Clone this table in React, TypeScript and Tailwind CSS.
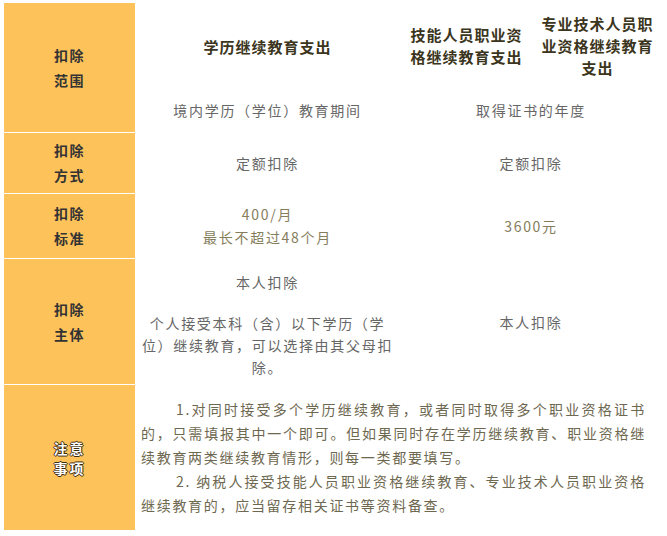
export default function App() {
  const font = { fontFamily: '"Noto Sans CJK SC", "Noto Sans", sans-serif' }
  const label = "bg-[#fdc25a] flex items-center justify-center text-center text-[14px] font-bold leading-[25px] tracking-[1.5px] text-[#333]"
  const head = "flex items-center justify-center text-center px-[4px] text-[15px] font-bold leading-[22px] tracking-[1px] text-[#3b3520]"
  const cell = "flex flex-col items-center justify-center text-center px-[5px] text-[14px] leading-[22px] tracking-[1.7px] text-[#666]"

  return (
    <div className="w-[667px] h-[536px] bg-white pt-[3px] pl-[4px]" style={font}>
      <div className="grid grid-cols-[131px_265px_133px_129px] grid-rows-[87px_41px_60px_64px_125px_145px] gap-y-px">
        <div className={`${label} row-span-2`}>
          <div>
            扣除
            <br />
            范围
          </div>
        </div>
        <div className={head}>学历继续教育支出</div>
        <div className={`${head} pb-[2px]`}>技能人员职业资格继续教育支出</div>
        <div className={`${head} pb-[2px]`}>专业技术人员职业资格继续教育支出</div>

        <div className={`${cell} pb-[3px]`}>境内学历（学位）教育期间</div>
        <div className={`${cell} col-span-2 pb-[3px]`}>取得证书的年度</div>

        <div className={label}>
          <div>
            扣除
            <br />
            方式
          </div>
        </div>
        <div className={cell}>定额扣除</div>
        <div className={`${cell} col-span-2`}>定额扣除</div>

        <div className={label}>
          <div>
            扣除
            <br />
            标准
          </div>
        </div>
        <div className={`${cell} text-[#857d5c] leading-[23px]`}>
          <p>400/月</p>
          <p>最长不超过48个月</p>
        </div>
        <div className={`${cell} col-span-2 text-[#857d5c]`}>3600元</div>

        <div className={label}>
          <div>
            扣除
            <br />
            主体
          </div>
        </div>
        <div className={`${cell} pt-[6px]`}>
          <p>本人扣除</p>
          <p className="mt-[19px]">个人接受本科（含）以下学历（学位）继续教育，可以选择由其父母扣除。</p>
        </div>
        <div className={`${cell} col-span-2`}>本人扣除</div>

        <div className={label}>
          <div className="text-white text-[14px] leading-[20px] tracking-[2px] [text-shadow:1px_0_0_#3a2a10,-1px_0_0_#3a2a10,0_1px_0_#3a2a10,0_-1px_0_#3a2a10]">
            注意
            <br />
            事项
          </div>
        </div>
        <div className="col-span-3 flex items-center pl-[6px] pr-[16px] pb-[2px] text-[14px] leading-[24px] tracking-[1.7px] text-[#6e6850] text-justify">
          <div>
            <p className="indent-[35px]">
              1.对同时接受多个学历继续教育，或者同时取得多个职业资格证书的，只需填报其中一个即可。但如果同时存在学历继续教育、职业资格继续教育两类继续教育情形，则每一类都要填写。
            </p>
            <p className="indent-[35px]">
              2.&nbsp;纳税人接受技能人员职业资格继续教育、专业技术人员职业资格继续教育的，应当留存相关证书等资料备查。
            </p>
          </div>
        </div>
      </div>
    </div>
  )
}
